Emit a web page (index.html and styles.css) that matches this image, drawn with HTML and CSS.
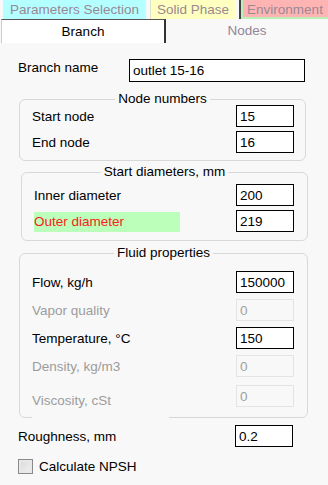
FILE: index.html
```html
<!DOCTYPE html>
<html lang="en">
<head>
    <meta charset="UTF-8">
    <meta name="viewport" content="width=device-width, initial-scale=1.0">
    <title>Branch</title>
    <link rel="stylesheet" href="styles.css">
</head>
<body>
    <div class="topTabs">
        <div class="topTab tabParams">Parameters Selection</div>
        <div class="topTab tabSolid">Solid Phase</div>
        <div class="topTab tabEnv">Environment</div>
    </div>

    <div class="subTabs">
        <div class="subTab active">Branch</div>
        <div class="subTab">Nodes</div>
    </div>

    <div class="panel">
        <div class="nameRow">
            <span class="label">Branch name</span>
            <input class="field nameField" type="text" value="outlet 15-16">
        </div>

        <div class="group groupNodes">
            <div class="legend">Node numbers</div>
            <div class="rows">
                <div class="row"><span class="label">Start node</span><input class="field" type="text" value="15"></div>
                <div class="row"><span class="label">End node</span><input class="field" type="text" value="16"></div>
            </div>
        </div>

        <div class="group groupDiam">
            <div class="legend">Start diameters, mm</div>
            <div class="rows">
                <div class="row"><span class="label">Inner diameter</span><input class="field" type="text" value="200"></div>
                <div class="row"><span class="label warn">Outer diameter</span><input class="field" type="text" value="219"></div>
            </div>
        </div>

        <div class="group groupFluid">
            <div class="legend">Fluid properties</div>
            <div class="rows wide">
                <div class="row"><span class="label">Flow, kg/h</span><input class="field" type="text" value="150000"></div>
                <div class="row"><span class="label off">Vapor quality</span><input class="field" type="text" value="0" disabled></div>
                <div class="row"><span class="label">Temperature, °C</span><input class="field" type="text" value="150"></div>
                <div class="row"><span class="label off">Density, kg/m3</span><input class="field" type="text" value="0" disabled></div>
                <div class="row lastRow"><span class="label off lastLabel">Viscosity, cSt</span><input class="field" type="text" value="0" disabled></div>
            </div>
        </div>

        <div class="row roughRow">
            <span class="label">Roughness, mm</span>
            <input class="field" type="text" value="0.2">
        </div>

        <label class="checkRow">
            <span class="checkBox"></span>
            <span>Calculate NPSH</span>
        </label>
    </div>
</body>
</html>
```

FILE: styles.css
```css
body {
    margin: 0;
    padding: 0;
    background: #f8f8f8;
    font-family: "Liberation Sans", Arial, sans-serif;
    font-size: 13px;
    color: #000;
    width: 328px;
    height: 485px;
    overflow: hidden;
}

.topTabs {
    display: flex;
    height: 19px;
}

.topTab {
    height: 19px;
    line-height: 19px;
    font-size: 13.5px;
    color: #9a8894;
    text-align: center;
    box-sizing: border-box;
    white-space: nowrap;
}

.tabParams {
    margin-left: 3px;
    width: 143px;
    background: #b4ffff;
}

.tabSolid {
    margin-left: 4px;
    width: 85px;
    background: #ffffc0;
    border-left: 1px solid #e0e0d0;
}

.tabEnv {
    margin-left: 4px;
    flex: 1;
    background: #ffb4b4;
    border-left: 2px solid #444;
    box-shadow: inset 2px 0 0 #b8f0b8, inset 0 -2px 0 #b8f0b8;
    padding-left: 1px;
}

.subTabs {
    display: flex;
    height: 24px;
}

.subTab {
    width: 162px;
    line-height: 24px;
    text-align: center;
    font-size: 13.5px;
    color: #928599;
}

.subTab.active {
    width: 165px;
    margin-left: 1px;
    background: #fff;
    color: #000;
    border-top: 1px solid #555;
    border-left: 1px solid #ccc;
    border-right: 2px solid #333;
    box-sizing: border-box;
}

.panel {
    padding-top: 16px;
}

.nameRow {
    display: flex;
    align-items: flex-start;
    padding-left: 18px;
}

.nameRow .label {
    width: 111px;
    padding-top: 1px;
}

.field {
    box-sizing: border-box;
    width: 58px;
    height: 22px;
    margin: 0;
    padding: 0 3px;
    border: 1px solid #000;
    border-radius: 0;
    background: #fff;
    font-family: "Liberation Sans", Arial, sans-serif;
    font-size: 13.5px;
    color: #000;
    outline: none;
}

.field:disabled {
    border-color: #e4e4e4;
    background: #f8f8f8;
    color: #a0a0a0;
}

.nameField {
    width: 176px;
    height: 23px;
}

.group {
    border: 1px solid #d8d8d8;
    border-radius: 6px;
    width: 287px;
    box-sizing: border-box;
}

.legend {
    display: table;
    margin: -8px auto 0;
    padding: 0 3px;
    line-height: 14px;
    font-size: 13.5px;
    background: #f8f8f8;
}

.rows {
    display: flex;
    flex-direction: column;
    gap: 4px;
    padding: 0 11px 7px 12px;
}

.rows.wide {
    gap: 6px;
    padding-bottom: 10px;
}

.row {
    display: flex;
    align-items: center;
    justify-content: space-between;
    height: 22px;
}

.lastRow {
    margin-top: 2px;
}

.label {
    font-size: 13.5px;
}

.label.off {
    color: #9c9c9c;
}

.label.warn {
    color: #ff1a1a;
    background: #bbffbb;
    width: 146px;
    line-height: 20px;
    margin-top: 1px;
}

/* the viscosity label paints over the left part of the bottom border */
.lastLabel {
    position: relative;
    top: 4px;
}

.lastLabel::after {
    content: '';
    position: absolute;
    left: 0;
    width: 137px;
    bottom: -10px;
    height: 3px;
    background: #f8f8f8;
}

.groupNodes {
    margin: 17px 0 0 19px;
}

.groupNodes .rows {
    margin-top: -1px;
}

.groupDiam {
    margin: 11px 0 0 21px;
}

.groupDiam .rows {
    margin-top: 5px;
    padding-right: 13px;
    padding-bottom: 8px;
}

.groupFluid {
    margin: 12px 0 0 19px;
    width: 289px;
}

.groupFluid .rows {
    margin-top: 11px;
    padding-right: 13px;
}

.roughRow {
    margin: 7px 0 0 18px;
    width: 275px;
}

.checkRow {
    display: flex;
    align-items: center;
    gap: 6px;
    margin: 12px 0 0 18px;
    font-size: 13.5px;
}

.checkBox {
    width: 15px;
    height: 15px;
    box-sizing: border-box;
    border: 1px solid #8a8a8a;
    background: linear-gradient(135deg, #d8d8d8, #f2f2f2);
    box-shadow: inset 0 0 0 2px #e8e8e8;
}
```
